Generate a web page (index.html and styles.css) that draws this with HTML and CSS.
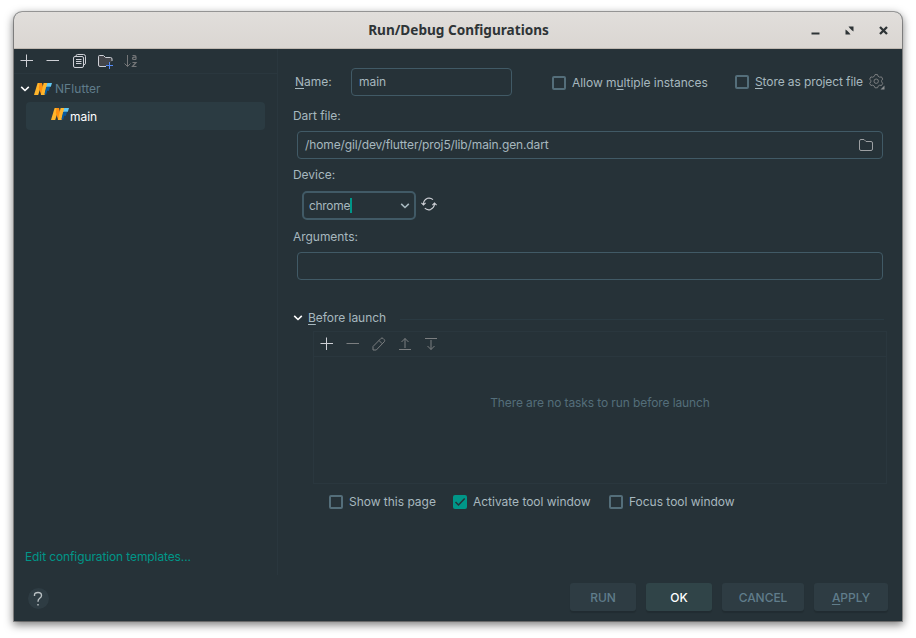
FILE: index.html
```html
<!DOCTYPE html>
<html lang="en">
<head>
<meta charset="utf-8">
<title>Run/Debug Configurations</title>
<link rel="stylesheet" href="styles.css">
</head>
<body>
<svg width="0" height="0" class="defs">
  <symbol id="nf" viewBox="0 0 18 12">
    <path d="M3.600 0H8L4.200 12H0z" fill="#ffb52b"/>
    <path d="M5.500 0H8L11 12H7.200L4.900 5z" fill="#ff8f0f"/>
    <path d="M9.600 0H13.700L10.400 12H6.800z" fill="#ffb52b"/>
    <path d="M13.300 0H18L16.800 3.800H12.200z" fill="#61c9f5"/>
    <path d="M12.100 4H16L14.900 7.800H13.200L12.200 11.500H10.400z" fill="#075ba0"/>
  </symbol>
  <symbol id="plus" viewBox="0 0 14 14"><path d="M0.500 6.500H13M6.500 0.500V13" fill="none" stroke="currentColor"/></symbol>
  <symbol id="minus" viewBox="0 0 14 14"><path d="M0.500 6.500H13" fill="none" stroke="currentColor"/></symbol>
  <symbol id="chev" viewBox="0 0 10 6"><path d="M1.200 0.900L5 4.500L8.800 0.900" fill="none" stroke="currentColor" stroke-width="1.600"/></symbol>
</svg>
<div class="window">
  <header class="titlebar">
    <h1>Run/Debug Configurations</h1>
    <div class="controls">
      <svg width="9" height="9" viewBox="0 0 9 9"><path d="M0.500 6.500h8v2h-8z" fill="#2e3436"/></svg>
      <svg width="9" height="9" viewBox="0 0 9 9"><path d="M3.500 0.500H8.500V5.500L6.800 4.200L4.800 2.200zM0.500 3.500L2.200 4.800L4.200 6.800L5.500 8.500H0.500z" fill="#2e3436"/></svg>
      <svg width="9" height="9" viewBox="0 0 9 9"><path d="M1 1L8 8M8 1L1 8" stroke="#2e3436" stroke-width="2.300"/></svg>
    </div>
  </header>
  <div class="content">
    <aside class="side">
      <div class="side-tools">
        <svg width="14" height="14"><use href="#plus"/></svg>
        <svg width="14" height="14"><use href="#minus"/></svg>
        <svg width="14" height="14" viewBox="0 0 14 14" fill="none" stroke="currentColor"><path d="M3 2.500V2Q3 0.500 4.500 0.500H10.500Q12.500 0.500 12.500 2.500V9Q12.500 10.500 11 10.800"/><rect x="0.500" y="2.500" width="10" height="11" rx="1.500"/><path d="M3 5.500H8.500M3 7.500H8.500M3 9.500H8.500"/></svg>
        <svg class="folder-add" width="16" height="15" viewBox="0 0 16 15" fill="none"><path d="M8 12.500H2Q0.500 12.500 0.500 11V2.500Q0.500 1.500 1.500 1.500H5.500L7.500 3.500H12.500Q14 3.500 14 5V7" fill="#43454a" stroke="#ced0d6"/><path d="M8 11.500H15M11.500 8V15" stroke="#548af7"/></svg>
        <svg class="sort" width="14" height="14" viewBox="0 0 14 14" fill="none" stroke="#747678"><path d="M3.500 1V12.500M0.500 9.500L3.500 12.500L6.500 9.500"/><path d="M8.500 1.500H10.500Q12 1.500 12 3V5.500M12 3.200H10Q8.500 3.400 8.500 4.400T10 5.500H12M8.500 8.500H12L8.500 12.500H12.500" stroke-width="1.200"/></svg>
      </div>
      <div class="tree">
        <div class="node"><svg class="arrow" width="10" height="6"><use href="#chev"/></svg><svg width="18" height="12"><use href="#nf"/></svg><span>NFlutter</span></div>
        <div class="leaf"><svg width="18" height="12"><use href="#nf"/></svg><span>main</span></div>
      </div>
      <a class="templates">Edit configuration templates...</a>
    </aside>
    <main class="form">
      <div class="name-row">
        <label class="name"><u>N</u>ame:</label>
        <div class="field name-field">main</div>
        <div class="check multi"><i class="box"></i><span>Allow m<u>u</u>ltiple instances</span></div>
        <div class="check store"><i class="box"></i><span><u>S</u>tore as project file</span></div>
        <svg class="gear" width="16" height="16" viewBox="0 0 16 16" fill="none" stroke="#7b7e80"><path d="M5.700 1.200L6 0.600H8.500L9.100 2.300L10.700 3.200L12.500 2.900L13.700 5.100L12.600 6.500V7.800L13.700 9.400L12.500 11.500L10.700 11.200L9.100 12.200L8.500 13.800H6L5.400 12.200L3.700 11.200L1.900 11.500L0.700 9.400L1.800 7.800V6.500L0.700 5.100L1.900 2.900L3.700 3.200L5.300 2.300z"/><circle cx="7.200" cy="7.200" r="2.200"/><path d="M15.500 11.500V15.500H11.500z" fill="#8c8f91" stroke="none"/></svg>
      </div>
      <label class="lbl dart">Dart file:</label>
      <div class="field wide path"><span>/home/gil/dev/flutter/proj5/lib/main.gen.dart</span><svg width="14" height="12" viewBox="0 0 14 12" fill="none" stroke="#9da0a3"><path d="M2 0.500H5L7 2.500H12Q13.500 2.500 13.500 4V10Q13.500 11.500 12 11.500H2Q0.500 11.500 0.500 10V2Q0.500 0.500 2 0.500z"/></svg></div>
      <label class="lbl device">Device:</label>
      <div class="device-row">
        <div class="combo"><span>chrome</span><i class="caret"></i><svg width="10" height="6"><use href="#chev"/></svg></div>
        <svg width="16" height="14" viewBox="0 0 16 14" fill="none" stroke="#ced0d6" stroke-width="1.100"><path d="M2.500 8V6.500Q2.800 3 6.500 1.300Q9.500 0.500 12 2.700M0.400 5.900L2.500 8L4.600 5.900M13.500 6V7.500Q13 11 9.500 12.600Q6 13.500 3.800 11.200M11.400 8.100L13.500 6L15.600 8.100"/></svg>
      </div>
      <label class="lbl args">Arguments:</label>
      <div class="field wide"></div>
      <div class="before"><svg width="10" height="6"><use href="#chev"/></svg><span><u>B</u>efore launch</span><i class="rule"></i></div>
      <section class="tasks">
        <div class="task-tools">
          <svg class="on" width="14" height="14"><use href="#plus"/></svg>
          <svg width="14" height="14"><use href="#minus"/></svg>
          <svg width="14" height="14" viewBox="0 0 14 14" fill="none" stroke="currentColor"><path d="M1 13V9.500L9 1.400Q10 0.500 11 1.400L12.300 2.700Q13.200 3.700 12.300 4.700L4.300 13zM7 3.500L10.200 6.700"/></svg>
          <svg width="14" height="14" viewBox="0 0 14 14" fill="none" stroke="currentColor"><path d="M1 12.500H13M7 11V1.500M3.500 5L7 1.500L10.500 5"/></svg>
          <svg width="14" height="14" viewBox="0 0 14 14" fill="none" stroke="currentColor"><path d="M1 1.500H13M7 3V12.500M3.500 9L7 12.500L10.500 9"/></svg>
        </div>
        <p>There are no tasks to run before launch</p>
      </section>
      <div class="options">
        <div class="check o1"><i class="box"></i><span>Show this page</span></div>
        <div class="check o2"><i class="box checked"><svg width="14" height="14" viewBox="0 0 14 14"><path d="M2.500 7L5.500 10L11.700 3.500" fill="none" stroke="#263238" stroke-width="1.500"/></svg></i><span>Activate tool window</span></div>
        <div class="check o3"><i class="box"></i><span>Focus tool window</span></div>
      </div>
    </main>
  </div>
  <footer class="footer">
    <div class="help"><svg width="10" height="16" viewBox="0 0 10 16" fill="none" stroke="#b9c0c3" stroke-width="1.400"><path d="M1.500 5V4Q1.500 1.500 5 1.500T8.500 4.500Q8.500 6 6.700 7.300T5 10.800M5 13V14.600"/></svg></div>
    <div class="btn run">RUN</div>
    <div class="btn ok">OK</div>
    <div class="btn cancel">CANCEL</div>
    <div class="btn apply"><span><u>A</u>PPLY</span></div>
  </footer>
</div>
</body>
</html>
```
FILE: styles.css
```css
* { box-sizing: border-box; }
body {
  margin: 0;
  width: 916px;
  height: 638px;
  padding: 12px 14px 0;
  background: #fff;
  overflow: hidden;
  font: 12px/16px Inter, sans-serif;
  letter-spacing: -.04px;
  color: #a7b8bf;
}
.defs { position: absolute; }
svg { display: block; flex: none; }
span { white-space: nowrap; }
u { text-decoration: underline; text-underline-offset: 2px; text-decoration-thickness: 1px; text-decoration-skip-ink: none; }
.window {
  width: 888px;
  height: 609px;
  background: #263238;
  border-radius: 8px 8px 0 0;
  box-shadow: 0 0 0 1px rgba(0,0,0,.32), 0 3px 9px 1px rgba(0,0,0,.5);
  display: flex;
  flex-direction: column;
}
.titlebar {
  height: 37px;
  flex: none;
  display: grid;
  grid-template-columns: 1fr auto 1fr;
  align-items: center;
  background: linear-gradient(#e1dedb, #dad6d2);
  border-bottom: 1px solid #bfb8b1;
  border-radius: 8px 8px 0 0;
}
h1 { grid-column: 2; margin: 0 0 0 1px; font: 700 13.6px/20px "Noto Sans", sans-serif; letter-spacing: 0; color: #2e3436; }
.controls { display: flex; gap: 25px; justify-content: flex-end; padding-right: 14px; }
.content { display: flex; height: 526px; flex: none; }
.side { width: 264px; border-right: 1px solid #2a373e; display: flex; flex-direction: column; }
.side-tools { height: 25px; padding: 5px 0 0 6px; display: flex; gap: 12px; border-bottom: 1px solid #2a373e; color: #ced0d6; }
.side-tools svg:nth-child(3) { margin-left: 1px; margin-right: -1px; }
.sort { margin-left: -2px; }
.node { height: 28px; display: flex; align-items: center; padding-left: 6px; color: #607d8b; }
.node .arrow { margin-right: 4px; color: #fff; }
.node svg { margin-top: 1px; }
.node span { margin: 2px 0 0 3px; letter-spacing: .08px; }
.leaf { width: 239px; height: 28px; margin-left: 12px; padding-left: 25px; display: flex; align-items: center; background: #2b3b42; border-radius: 4px; color: #fff; }
.leaf svg { margin-bottom: 4px; }
.leaf span { margin: 2px 0 0 1px; }
.templates { margin: auto 0 10px 11px; color: #009688; white-space: nowrap; letter-spacing: -.11px; }
.form { flex: 1; display: flex; flex-direction: column; padding: 19px 14px 0 15px; }
.name-row { height: 28px; display: flex; align-items: center; }
.name { width: 56px; padding-left: 2px; margin-right: 2px; }
.field { height: 28px; border: 1px solid #415a66; border-radius: 4px; padding: 0 7px; display: flex; align-items: center; flex: none; }
.name-field { width: 161px; }
.wide { width: 586px; margin-left: 4px; }
.check { display: flex; align-items: center; gap: 6px; }
.box { width: 14px; height: 14px; border: 2px solid #546e7a; border-radius: 2px; flex: none; }
.box.checked { border: 0; background: #009688; }
.multi { width: 183px; margin: 2px 0 0 40px; }
.store { width: 134px; }
.store span { letter-spacing: -.1px; }
.lbl { height: 16px; flex: none; }
.dart { margin: 12px 0 7px; }
.path { justify-content: space-between; padding-right: 9px; }
.path span { letter-spacing: -.12px; }
.device { margin: 8px 0; }
.device-row { display: flex; margin-left: 9px; gap: 5px; height: 29px; }
.device-row > svg { margin-top: 6px; }
.combo { width: 114px; height: 29px; border: 2px solid #415a66; border-radius: 5px; padding: 0 4px 0 5px; display: flex; align-items: center; }
.combo span { letter-spacing: -.3px; }
.combo svg { margin-left: auto; margin-top: 1px; }
.caret { width: 2px; height: 15px; background: #009688; }
.args { margin: 9px 0 7px; }
.before { display: flex; align-items: center; margin: 30px 4px 0 0; height: 16px; flex: none; }
.before svg { color: #fff; margin-right: 5px; }
.rule { flex: 1; height: 1px; background: #2a3a42; margin: 2px 0 0 14px; }
.tasks { width: 574px; height: 153px; flex: none; margin: 5px 0 0 20px; border: 1px solid #2a373e; }
.task-tools { display: flex; gap: 12px; height: 25px; padding: 5px 0 0 6px; border-bottom: 1px solid #2a373e; color: #7b7e80; }
.task-tools .on { color: #ced0d6; }
.tasks p { margin: 38px 0 0; text-align: center; color: #546e7a; letter-spacing: -.1px; }
.options { display: flex; margin: 10px 0 0 36px; height: 16px; }
.o1, .o2, .o3 { flex: none; }
.o1 { width: 124px; }
.o2 { width: 156px; }
.options span { letter-spacing: -.02px; }
.footer { flex: 1; display: flex; gap: 10px; padding: 8px 14px 0; }
.help { width: 21px; height: 21px; margin: 5px auto 0 0; border-radius: 50%; background: #2e3c43; display: grid; place-items: center; }
.help svg { margin-right: 1px; }
.btn { height: 28px; padding-top: 2px; border-radius: 3px; background: #2e3c43; color: #607d8b; font-weight: 500; display: grid; place-items: center; box-shadow: 0 2px 1px rgba(0,0,0,.12); }
.run, .ok { width: 66px; }
.cancel { width: 82px; }
.apply { width: 74px; }
.ok { background: #304448; color: #fff; }
```
